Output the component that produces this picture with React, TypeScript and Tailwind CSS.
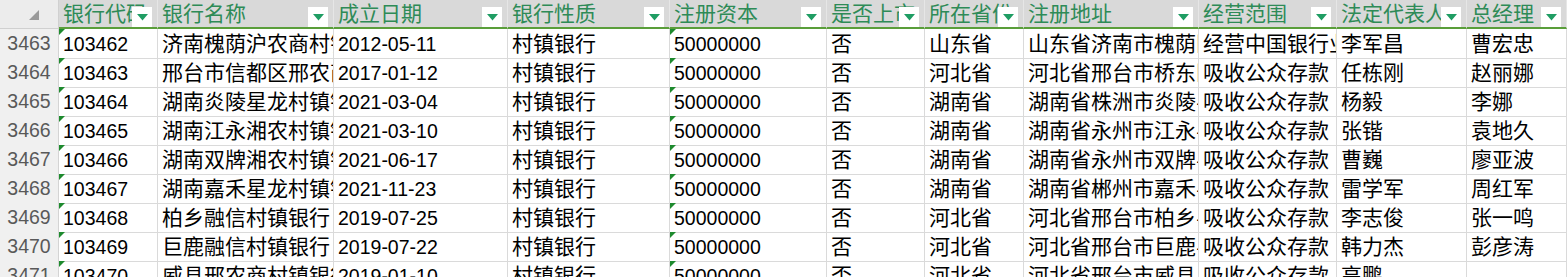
import React from "react";

const FONT = { fontFamily: '"Liberation Sans", "Noto Sans CJK SC", sans-serif' };

const headers = [
  "银行代码",
  "银行名称",
  "成立日期",
  "银行性质",
  "注册资本",
  "是否上市",
  "所在省份",
  "注册地址",
  "经营范围",
  "法定代表人",
  "总经理",
];

type Row = [string, string, string, string, string, string, string, string, string, string, string, string];

const rows: Row[] = [
  ["3463", "103462", "济南槐荫沪农商村镇银行", "2012-05-11", "村镇银行", "50000000", "否", "山东省", "山东省济南市槐荫区", "经营中国银行业监督管理", "李军昌", "曹宏忠"],
  ["3464", "103463", "邢台市信都区邢农商村镇银行", "2017-01-12", "村镇银行", "50000000", "否", "河北省", "河北省邢台市桥东区", "吸收公众存款", "任栋刚", "赵丽娜"],
  ["3465", "103464", "湖南炎陵星龙村镇银行", "2021-03-04", "村镇银行", "50000000", "否", "湖南省", "湖南省株洲市炎陵县", "吸收公众存款", "杨毅", "李娜"],
  ["3466", "103465", "湖南江永湘农村镇银行", "2021-03-10", "村镇银行", "50000000", "否", "湖南省", "湖南省永州市江永县", "吸收公众存款", "张锴", "袁地久"],
  ["3467", "103466", "湖南双牌湘农村镇银行", "2021-06-17", "村镇银行", "50000000", "否", "湖南省", "湖南省永州市双牌县", "吸收公众存款", "曹巍", "廖亚波"],
  ["3468", "103467", "湖南嘉禾星龙村镇银行", "2021-11-23", "村镇银行", "50000000", "否", "湖南省", "湖南省郴州市嘉禾县", "吸收公众存款", "雷学军", "周红军"],
  ["3469", "103468", "柏乡融信村镇银行", "2019-07-25", "村镇银行", "50000000", "否", "河北省", "河北省邢台市柏乡县", "吸收公众存款", "李志俊", "张一鸣"],
  ["3470", "103469", "巨鹿融信村镇银行", "2019-07-22", "村镇银行", "50000000", "否", "河北省", "河北省邢台市巨鹿县", "吸收公众存款", "韩力杰", "彭彦涛"],
  ["3471", "103470", "威县邢农商村镇银行", "2019-01-10", "村镇银行", "50000000", "否", "河北省", "河北省邢台市威县", "吸收公众存款", "高鹏", ""],
];

const GRID =
  "grid grid-cols-[59px_99px_176px_174px_162px_157px_98px_99px_175px_138px_130px_100px]";

function FilterButton() {
  return (
    <div className="absolute right-[5px] top-[7px] w-5 h-5 bg-white flex items-center justify-center">
      <svg width="11" height="7" viewBox="0 0 11 7">
        <polygon points="0,0 11,0 5.5,6.5" fill="#1f9d63" />
      </svg>
    </div>
  );
}

function GreenMark() {
  return (
    <svg className="absolute left-0 top-0" width="6" height="6" viewBox="0 0 6 6">
      <polygon points="0,0 6,0 0,6" fill="#1e8a2e" />
    </svg>
  );
}

export default function App() {
  return (
    <div className="w-[1567px] h-[277px] overflow-hidden bg-white" style={FONT}>
      {/* header */}
      <div className={GRID + " h-[29px]"}>
        <div className="relative bg-[#ececec] border-r border-b border-[#d0d0d0] flex items-center justify-center">
          <svg width="12" height="12" viewBox="0 0 12 12" className="ml-[10px] mt-[2px]">
            <polygon points="11,1 11,11 1,11" fill="#9a9a9a" />
          </svg>
        </div>
        {headers.map((h, i) => (
          <div
            key={i}
            className="relative bg-[#d9d9d9] border-r border-[#e6e6e6] border-b-2 border-b-[#5a9e3a] overflow-hidden whitespace-nowrap pl-[4px] text-[21px] leading-[27px] text-[#2e8b57]"
          >
            {h}
            <FilterButton />
          </div>
        ))}
      </div>
      {/* body */}
      {rows.map((r, ri) => (
        <div key={ri} className={GRID + " h-[29px]"}>
          <div className="bg-[#f0f0f0] border-r border-b border-[#d4d4d4] flex items-center justify-center text-[19.5px] text-[#595959]">
            {r[0]}
          </div>
          {r.slice(1).map((c, ci) => {
            const numeric = ci === 0 || ci === 2 || ci === 4;
            return (
              <div
                key={ci}
                className={
                  "relative border-r border-b border-[#dadada] overflow-hidden whitespace-nowrap pl-[4px] flex items-center text-black " +
                  (numeric ? "text-[19.5px]" : "text-[21px]")
                }
              >
                {(ci === 0 || ci === 4) && <GreenMark />}
                <span className="pt-[1px]">{c}</span>
              </div>
            );
          })}
        </div>
      ))}
    </div>
  );
}
